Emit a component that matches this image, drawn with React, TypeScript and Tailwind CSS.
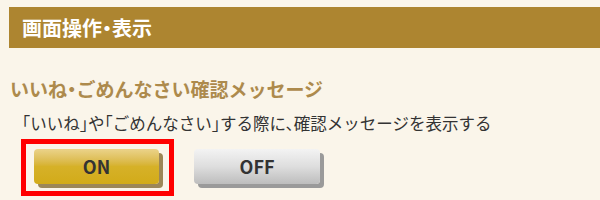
import React, { useState } from "react";

const font = {
  fontFamily: '"Noto Sans CJK JP", "Noto Sans", sans-serif',
  fontFeatureSettings: '"halt"',
};

export default function App() {
  const [on, setOn] = useState(true);

  return (
    <div
      className="w-[600px] h-[200px] overflow-hidden bg-[#faf5ea] text-[#333]"
      style={font}
    >
      {/* Section header */}
      <div className="ml-[9px] mt-[7px] h-[41px] bg-[#ad8530] pl-[13px] flex items-center">
        <h2 className="text-white font-bold text-[20px] leading-none">画面操作・表示</h2>
      </div>

      {/* Setting */}
      <h3 className="ml-[10px] mt-[31px] text-[19px] font-bold leading-none text-[#ad8a4c]">
        いいね・ごめんなさい確認メッセージ
      </h3>
      <p className="ml-[22px] mt-[17px] text-[16.5px] leading-none">
        「いいね」や「ごめんなさい」する際に、確認メッセージを表示する
      </p>

      <div className="flex items-start mt-[7px] ml-[21px] gap-[7px]">
        <div
          className={`w-[153px] h-[57px] border-[5px] pl-[8px] pt-[5px] ${
            on ? "border-[#ff0000]" : "border-transparent"
          }`}
        >
          <button
            onClick={() => setOn(true)}
            className="w-[125px] h-[35px] rounded-[4px] bg-gradient-to-b from-[#ebd389] via-[#d6b128] to-[#d2ab18] shadow-[4px_4px_0_#9c8757] font-bold text-[18px] text-[#333]"
          >
            ON
          </button>
        </div>
        <div
          className={`w-[153px] h-[57px] border-[5px] pl-[8px] pt-[5px] ${
            !on ? "border-[#ff0000]" : "border-transparent"
          }`}
        >
          <button
            onClick={() => setOn(false)}
            className="w-[126px] h-[35px] rounded-[4px] bg-gradient-to-b from-[#f3f3f3] via-[#dedede] to-[#bdbdbd] shadow-[4px_4px_0_#9a9a9a] font-bold text-[18px] text-[#333]"
          >
            OFF
          </button>
        </div>
      </div>
    </div>
  );
}
